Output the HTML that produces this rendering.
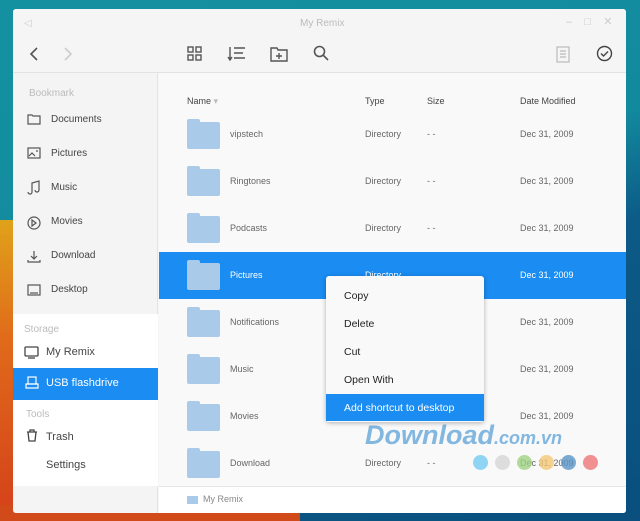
<!DOCTYPE html>
<html><head><style>
*{margin:0;padding:0;box-sizing:border-box}
body{width:640px;height:521px;overflow:hidden;position:relative;font-family:"Liberation Sans",sans-serif;background:linear-gradient(160deg,#1491a0 0%,#128a9e 45%,#0c5a86 60%,#0a4f7e 100%)}
.bl{position:absolute;left:0;top:220px;width:40px;height:301px;background:linear-gradient(180deg,#e0a21a,#e06a1a 40%,#d4401a)}
.bb{position:absolute;left:0;top:505px;width:300px;height:16px;background:#d04a1a}
.win{position:absolute;left:13px;top:9px;width:613px;height:504px;background:#f6f6f6;border-radius:3px;overflow:hidden}
.tb{position:absolute;left:0;top:0;width:613px;height:64px;background:#f5f5f5;border-bottom:1px solid #e3e3e3;z-index:2}
.side{position:absolute;left:0;top:56px;width:145px;height:448px;background:#f4f4f4;border-right:1px solid #e4e4e4}
.main{position:absolute;left:146px;top:56px;width:467px;height:448px;background:#f9f9f9}
.t{position:absolute;white-space:nowrap}
.sl{font-size:10px;color:#bbb}
.si{font-size:10px;color:#444}
.row{position:absolute;left:0;width:467px;height:47px}
.fold{position:absolute;left:28px;width:33px;height:27px;background:#a9cbe9;border-radius:2px}
.fold:before{content:"";position:absolute;left:0;top:-3px;width:13px;height:5px;background:#a9cbe9;border-radius:2px 2px 0 0}
.nm{font-size:9px;color:#666}
.menu{position:absolute;left:326px;top:276px;width:158px;height:146px;background:#f9f9f9;border-radius:3px;box-shadow:0 1px 5px rgba(0,0,0,.3)}
.mi{position:absolute;left:18px;font-size:10.5px;color:#222}
</style></head><body>
<div class="bl"></div><div class="bb"></div>
<div class="win">
 <div class="tb">
  <div class="t" style="left:11px;top:9px;color:#ccc;font-size:10px">◁</div>
  <div class="t" style="left:287px;top:9px;color:#bbb;font-size:10px">My Remix</div>
  <div class="t" style="left:553px;top:6px;color:#ccc;font-size:11px">–&nbsp;&nbsp;&nbsp;&nbsp;□&nbsp;&nbsp;&nbsp;&nbsp;✕</div>
  <svg class="t" style="left:14px;top:37px" width="14" height="16"><path d="M10 2L4 8l6 6" stroke="#555" stroke-width="1.6" fill="none"/></svg>
  <svg class="t" style="left:48px;top:37px" width="14" height="16"><path d="M4 2l6 6-6 6" stroke="#ccc" stroke-width="1.6" fill="none"/></svg>
  <svg class="t" style="left:174px;top:37px" width="16" height="16" fill="none" stroke="#555" stroke-width="1.4"><rect x="1" y="1" width="5" height="5"/><rect x="9" y="1" width="5" height="5"/><rect x="1" y="9" width="5" height="5"/><rect x="9" y="9" width="5" height="5"/></svg>
  <svg class="t" style="left:214px;top:37px" width="20" height="16" fill="none" stroke="#555" stroke-width="1.4"><path d="M3 1v13M1 11l2 3 2-3M7 2h11M7 7h9M7 12h11"/></svg>
  <svg class="t" style="left:257px;top:37px" width="18" height="16" fill="none" stroke="#555" stroke-width="1.4"><path d="M1 2h6l1 2h9v11H1z M9 7v6M6 10h6"/></svg>
  <svg class="t" style="left:300px;top:36px" width="16" height="16" fill="none" stroke="#555" stroke-width="1.6"><circle cx="6.5" cy="6.5" r="5"/><path d="M10 10l5 5"/></svg>
  <svg class="t" style="left:543px;top:37px" width="14" height="17" fill="none" stroke="#bbb" stroke-width="1.2"><rect x="1" y="1" width="12" height="15"/><path d="M4 5h6M4 8h6M4 11h6"/></svg>
  <svg class="t" style="left:583px;top:36px" width="17" height="17" fill="none" stroke="#444" stroke-width="1.4"><circle cx="8.5" cy="8.5" r="7"/><path d="M5 8.5l2.5 2.5 4.5-4.5"/></svg>
 </div>
 <div class="side">
  <div class="t sl" style="left:16px;top:23px">Bookmark</div>
  <div class="t si" style="left:38px;top:49px">Documents</div>
  <div class="t si" style="left:38px;top:83px">Pictures</div>
  <div class="t si" style="left:38px;top:117px">Music</div>
  <div class="t si" style="left:38px;top:151px">Movies</div>
  <div class="t si" style="left:38px;top:185px">Download</div>
  <div class="t si" style="left:38px;top:219px">Desktop</div>
  <svg class="t" style="left:14px;top:47px" width="14" height="200" fill="none" stroke="#555" stroke-width="1.2"><path d="M1 3h4l1 1h7v8H1z"/><rect x="1" y="36" width="12" height="10"/><path d="M2 44l3-3 3 3M9 39h2"/><path d="M5 80v-9l7-2v9M1 80a2 2 0 104 0M8 78a2 2 0 104 0"/><circle cx="7" cy="111" r="6"/><path d="M5 108l4 3-4 3z"/><path d="M7 139v8M4 144l3 3 3-3M1 148v2h12v-2"/><rect x="1" y="173" width="12" height="10"/><path d="M3 181h8"/></svg>
  <div style="position:absolute;left:0;top:249px;width:145px;height:172px;background:#fff"></div>
  <div class="t sl" style="left:11px;top:259px">Storage</div>
  <svg class="t" style="left:11px;top:281px" width="15" height="13" fill="none" stroke="#444" stroke-width="1.3"><rect x="1" y="1" width="13" height="9" rx="1"/><path d="M4 12h7"/></svg>
  <div class="t" style="left:33px;top:281px;font-size:11px;color:#444">My Remix</div>
  <div style="position:absolute;left:0;top:303px;width:145px;height:32px;background:#1a8cf2"></div>
  <svg class="t" style="left:12px;top:311px" width="14" height="14" fill="none" stroke="#fff" stroke-width="1.2"><rect x="3" y="1" width="8" height="7"/><path d="M1 8h12v4H1z"/></svg>
  <div class="t" style="left:33px;top:312px;font-size:11px;color:#fff">USB flashdrive</div>
  <div class="t sl" style="left:13px;top:344px">Tools</div>
  <svg class="t" style="left:13px;top:364px" width="12" height="13" fill="none" stroke="#444" stroke-width="1.3"><path d="M1 3h10M4 3V1h4v2M2 3l1 9h6l1-9"/></svg>
  <div class="t" style="left:33px;top:366px;font-size:11px;color:#444">Trash</div>
  <div class="t" style="left:33px;top:394px;font-size:11px;color:#444">Settings</div>
 </div>
 <div class="main">
  <div class="t" style="left:28px;top:31px;font-size:9px;color:#444">Name <span style="color:#bbb">▾</span></div>
  <div class="t" style="left:206px;top:31px;font-size:9px;color:#444">Type</div>
  <div class="t" style="left:268px;top:31px;font-size:9px;color:#444">Size</div>
  <div class="t" style="left:361px;top:31px;font-size:9px;color:#444">Date Modified</div>
  <div class="row" style="top:46px"><div class="fold" style="top:11px"></div><div class="t nm" style="left:71px;top:18px">vipstech</div><div class="t nm" style="left:206px;top:18px">Directory</div><div class="t nm" style="left:268px;top:18px">- -</div><div class="t nm" style="left:361px;top:18px">Dec 31, 2009</div></div>
  <div class="row" style="top:93px"><div class="fold" style="top:11px"></div><div class="t nm" style="left:71px;top:18px">Ringtones</div><div class="t nm" style="left:206px;top:18px">Directory</div><div class="t nm" style="left:268px;top:18px">- -</div><div class="t nm" style="left:361px;top:18px">Dec 31, 2009</div></div>
  <div class="row" style="top:140px"><div class="fold" style="top:11px"></div><div class="t nm" style="left:71px;top:18px">Podcasts</div><div class="t nm" style="left:206px;top:18px">Directory</div><div class="t nm" style="left:268px;top:18px">- -</div><div class="t nm" style="left:361px;top:18px">Dec 31, 2009</div></div>
  <div class="row" style="top:187px;background:#1a8cf2"><div class="fold" style="top:11px"></div><div class="t nm" style="left:71px;top:18px;color:#fff">Pictures</div><div class="t nm" style="left:206px;top:18px;color:#fff">Directory</div><div class="t nm" style="left:361px;top:18px;color:#fff">Dec 31, 2009</div></div>
  <div class="row" style="top:234px"><div class="fold" style="top:11px"></div><div class="t nm" style="left:71px;top:18px">Notifications</div><div class="t nm" style="left:361px;top:18px">Dec 31, 2009</div></div>
  <div class="row" style="top:281px"><div class="fold" style="top:11px"></div><div class="t nm" style="left:71px;top:18px">Music</div><div class="t nm" style="left:361px;top:18px">Dec 31, 2009</div></div>
  <div class="row" style="top:328px"><div class="fold" style="top:11px"></div><div class="t nm" style="left:71px;top:18px">Movies</div><div class="t nm" style="left:361px;top:18px">Dec 31, 2009</div></div>
  <div class="row" style="top:375px"><div class="fold" style="top:11px"></div><div class="t nm" style="left:71px;top:18px">Download</div><div class="t nm" style="left:206px;top:18px">Directory</div><div class="t nm" style="left:268px;top:18px">- -</div><div class="t nm" style="left:361px;top:18px">Dec 31, 2009</div></div>
  <div style="position:absolute;left:0;top:421px;width:467px;height:27px;background:#fff;border-top:1px solid #e6e6e6"></div>
  <div style="position:absolute;left:28px;top:431px;width:11px;height:8px;background:#a9cbe9"></div>
  <div class="t" style="left:44px;top:429px;font-size:9px;color:#888">My Remix</div>
 </div>
</div>
<div class="t" style="left:365px;top:420px;font-size:27px;font-weight:bold;font-style:italic;color:rgba(90,160,215,.75)">Download<span style="font-size:18px">.com.vn</span></div>
<div class="t" style="left:473px;top:455px;width:15px;height:15px;border-radius:50%;background:#8fd4f2"></div>
<div class="t" style="left:495px;top:455px;width:15px;height:15px;border-radius:50%;background:#ddd"></div>
<div class="t" style="left:517px;top:455px;width:15px;height:15px;border-radius:50%;background:rgba(160,210,130,.8)"></div>
<div class="t" style="left:539px;top:455px;width:15px;height:15px;border-radius:50%;background:rgba(245,200,120,.8)"></div>
<div class="t" style="left:561px;top:455px;width:15px;height:15px;border-radius:50%;background:rgba(90,150,200,.8)"></div>
<div class="t" style="left:583px;top:455px;width:15px;height:15px;border-radius:50%;background:#f09090"></div>
<div class="menu">
 <div class="mi" style="top:14px">Copy</div>
 <div class="mi" style="top:42px">Delete</div>
 <div class="mi" style="top:70px">Cut</div>
 <div class="mi" style="top:98px">Open With</div>
 <div style="position:absolute;left:0;top:118px;width:158px;height:27px;background:#1a8cf2"></div>
 <div class="mi" style="top:126px;color:#fff">Add shortcut to desktop</div>
</div>
</body></html>
